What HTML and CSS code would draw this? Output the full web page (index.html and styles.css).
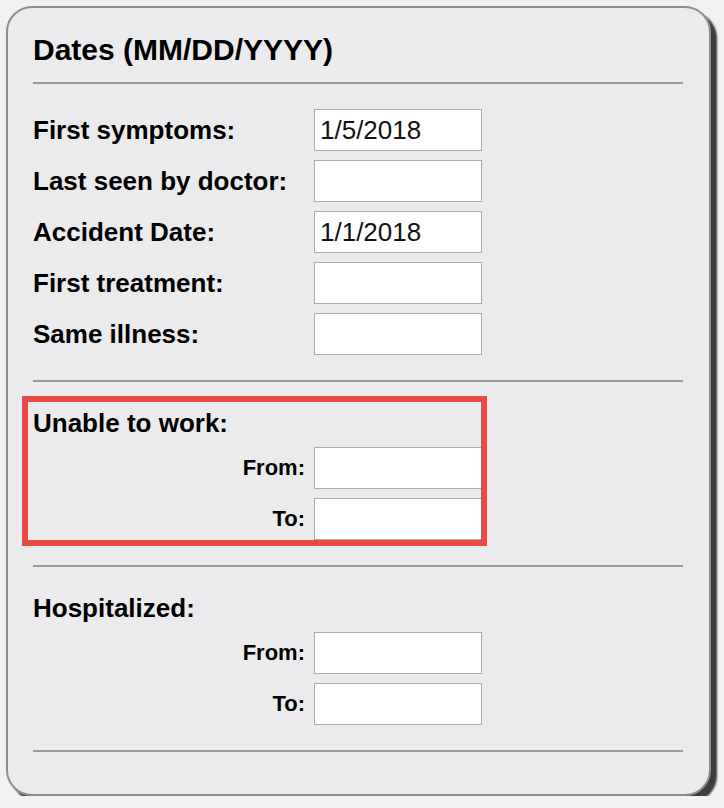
FILE: index.html
```html
<!DOCTYPE html>
<html>
<head>
<meta charset="utf-8">
<link rel="stylesheet" href="styles.css">
</head>
<body>
<div class="card">
  <h1 class="title">Dates (MM/DD/YYYY)</h1>
  <div class="rule"></div>
  <div class="rows main-rows">
    <label class="lbl">First symptoms:</label><input class="field" type="text" value="1/5/2018">
    <label class="lbl">Last seen by doctor:</label><input class="field" type="text" value="">
    <label class="lbl">Accident Date:</label><input class="field" type="text" value="1/1/2018">
    <label class="lbl">First treatment:</label><input class="field" type="text" value="">
    <label class="lbl">Same illness:</label><input class="field" type="text" value="">
  </div>
  <div class="rule"></div>
  <div class="sub highlighted">
    <div class="sub-title">Unable to work:</div>
    <div class="rows">
      <label class="lbl small">From:</label><input class="field" type="text" value="">
      <label class="lbl small">To:</label><input class="field" type="text" value="">
    </div>
    <div class="highlight"></div>
  </div>
  <div class="rule"></div>
  <div class="sub">
    <div class="sub-title">Hospitalized:</div>
    <div class="rows">
      <label class="lbl small">From:</label><input class="field" type="text" value="">
      <label class="lbl small">To:</label><input class="field" type="text" value="">
    </div>
  </div>
  <div class="rule"></div>
</div>
</body>
</html>
```
FILE: styles.css
```css
html, body {
  margin: 0;
  padding: 0;
  background: #f1f1f1;
}
body {
  font-family: "Liberation Sans", Arial, sans-serif;
  color: #000;
}
.card {
  box-sizing: border-box;
  margin: 6px 0 0 6px;
  width: 705px;
  height: 790px;
  background: #ebebed;
  border: 2px solid #8e8e8e;
  border-radius: 26px;
  box-shadow: 6px 6px 2px #3d3d3d;
  padding: 25px 26px 0 25px;
}
.title {
  margin: 0 0 15px 0;
  font-size: 30px;
  line-height: 34px;
  font-weight: bold;
}
.rule {
  height: 2px;
  background: #9c9c9c;
  width: 650px;
}
.rows {
  display: grid;
  grid-template-columns: 281px 168px;
  row-gap: 9px;
  align-items: center;
}
.main-rows {
  margin: 25px 0;
}
.lbl {
  font-size: 26px;
  font-weight: bold;
  line-height: 30px;
}
.lbl.small {
  font-size: 22px;
  text-align: right;
  padding-right: 9px;
}
.field {
  box-sizing: border-box;
  width: 168px;
  height: 42px;
  margin: 0;
  border: 1px solid #ababab;
  background: #fff;
  font-family: "Liberation Sans", Arial, sans-serif;
  font-size: 26px;
  color: #111;
  padding: 0 0 0 5px;
  outline: none;
}
.sub {
  position: relative;
  padding: 26px 0 25px 0;
}
.sub-title {
  font-size: 26px;
  font-weight: bold;
  line-height: 30px;
  margin-bottom: 9px;
}
.highlight {
  position: absolute;
  left: -11px;
  top: 14px;
  width: 465px;
  height: 150px;
  box-sizing: border-box;
  border: 6px solid #e84a45;
  pointer-events: none;
}
```
